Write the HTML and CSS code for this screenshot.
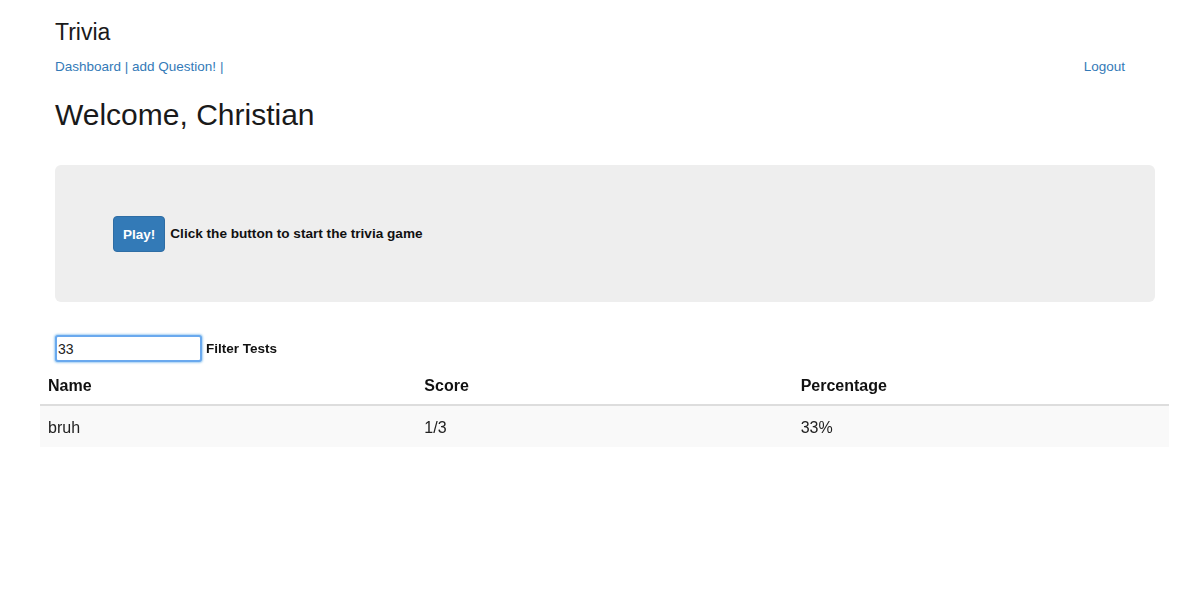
FILE: index.html
```html
<!DOCTYPE html>
<html>
<head>
<meta charset="utf-8">
<link rel="stylesheet" href="styles.css">
</head>
<body>
<div class="page">
  <header class="header">
    <div class="brand">Trivia</div>
    <nav class="nav">
      <div class="nav-left"><a href="#">Dashboard</a> | <a href="#">add Question!</a> |</div>
      <a href="#" class="logout">Logout</a>
    </nav>
    <h1 class="welcome">Welcome, Christian</h1>
  </header>
  <section class="jumbotron">
    <button class="btn-play">Play!</button>
    <span class="jumbo-text">Click the button to start the trivia game</span>
  </section>
  <div class="filter">
    <input class="filter-input" type="text" value="33" autofocus>
    <span class="filter-label">Filter Tests</span>
  </div>
  <table class="results">
    <thead>
      <tr><th>Name</th><th>Score</th><th>Percentage</th></tr>
    </thead>
    <tbody>
      <tr><td>bruh</td><td>1/3</td><td>33%</td></tr>
    </tbody>
  </table>
</div>
</body>
</html>
```
FILE: styles.css
```css
html, body {
  margin: 0;
  padding: 0;
  background: #fff;
}
body {
  font-family: "Liberation Sans", Arial, sans-serif;
  color: #222;
  font-size: 14px;
}
.page {
  padding: 0 31px 0 40px;
}
.header {
  padding: 0 44px 0 15px;
}
.brand {
  font-size: 23px;
  line-height: 26px;
  padding-top: 19px;
  color: #1a1a1a;
}
.nav {
  display: flex;
  justify-content: space-between;
  margin-top: 14px;
  line-height: 16px;
  font-size: 13.5px;
  color: #337ab7;
}
.nav a {
  color: #337ab7;
  text-decoration: none;
}
.welcome {
  font-size: 30px;
  font-weight: normal;
  line-height: 34px;
  margin: 23px 0 0;
  color: #1a1a1a;
}
.jumbotron {
  margin: 33px 14px 0 15px;
  height: 137px;
  background: #eee;
  border-radius: 6px;
  display: flex;
  align-items: center;
  padding-left: 58px;
  box-sizing: border-box;
  gap: 5px;
}
.btn-play {
  font-family: "Liberation Sans", Arial, sans-serif;
  font-weight: bold;
  font-size: 13.5px;
  color: #fff;
  background: #337ab7;
  border: 1px solid #2e6da4;
  border-radius: 4px;
  height: 36px;
  padding: 0 9px;
  margin-top: 1px;
}
.jumbo-text {
  font-weight: bold;
  font-size: 13.6px;
  color: #111;
}
.filter {
  display: flex;
  align-items: center;
  margin: 33px 0 0 15px;
  gap: 4px;
}
.filter-input {
  width: 147px;
  height: 27px;
  box-sizing: border-box;
  border: 2px solid #6aa9ee;
  border-radius: 3px;
  box-shadow: 0 0 2px 1px rgba(102, 175, 233, 0.6);
  font-family: "Liberation Sans", Arial, sans-serif;
  font-size: 14px;
  padding: 0 1px;
  color: #222;
  outline: none;
}
.filter-label {
  font-weight: bold;
  font-size: 13.5px;
  color: #111;
}
.results {
  width: 1129px;
  border-collapse: collapse;
  margin-top: 5px;
  font-size: 16px;
}
.results th, .results td {
  width: 33.33%;
  text-align: left;
  padding: 8px 8px;
  line-height: 22px;
}
.results th {
  font-weight: bold;
  color: #111;
  border-bottom: 2px solid #ddd;
  padding-bottom: 7px;
}
.results td {
  background: #f9f9f9;
  color: #222;
  padding: 11px 8px 8px;
}
```
